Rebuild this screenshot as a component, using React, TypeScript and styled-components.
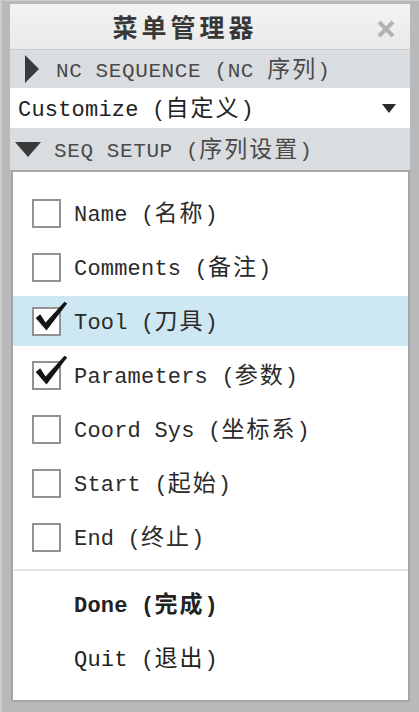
import styled, { createGlobalStyle } from 'styled-components';

const GlobalStyle = createGlobalStyle`
  html, body {
    margin: 0;
    padding: 0;
    background: #bcbcbc;
  }
  * { box-sizing: border-box; }
`;

const MONO = `"Liberation Mono", "Noto Sans CJK SC", monospace`;

type Item = {
  en: string;
  zh: string;
  checked: boolean;
  active?: boolean;
};

const items: Item[] = [
  { en: 'Name', zh: '名称', checked: false },
  { en: 'Comments', zh: '备注', checked: false },
  { en: 'Tool', zh: '刀具', checked: true, active: true },
  { en: 'Parameters', zh: '参数', checked: true },
  { en: 'Coord Sys', zh: '坐标系', checked: false },
  { en: 'Start', zh: '起始', checked: false },
  { en: 'End', zh: '终止', checked: false },
];

const Label = ({ en, zh }: { en: string; zh: string }) => (
  <>
    {en} (<S.Zh>{zh}</S.Zh>)
  </>
);

const CheckMark = () => (
  <S.Mark viewBox="0 0 40 40">
    <path d="M3 21 L8 17 L14 26 L35 3 L38 5 L15 35 Z" fill="#141414" />
  </S.Mark>
);

const App = () => {
  return (
    <S.Window>
      <GlobalStyle />
      <S.TitleBar>
        <S.Title>菜单管理器</S.Title>
        <S.Close viewBox="0 0 18 18">
          <path d="M2 2 L16 16 M16 2 L2 16" stroke="#b2b2b2" strokeWidth="4" />
        </S.Close>
      </S.TitleBar>

      <S.SectionHeader>
        <S.Arrow viewBox="0 0 14 28" $w={14} $h={28}>
          <path d="M0 0 L14 14 L0 28 Z" fill="#3a3a3a" />
        </S.Arrow>
        <S.HeaderText>
          NC SEQUENCE (NC <S.Zh>序列</S.Zh>)
        </S.HeaderText>
      </S.SectionHeader>

      <S.Dropdown>
        <S.DropdownText>
          <Label en="Customize" zh="自定义" />
        </S.DropdownText>
        <S.Caret viewBox="0 0 14 9">
          <path d="M0 0 L14 0 L7 9 Z" fill="#2a2a2a" />
        </S.Caret>
      </S.Dropdown>

      <S.SectionHeader $tall>
        <S.Arrow viewBox="0 0 26 15" $w={26} $h={15} $down>
          <path d="M0 0 L26 0 L13 15 Z" fill="#3a3a3a" />
        </S.Arrow>
        <S.HeaderText>
          SEQ SETUP (<S.Zh>序列设置</S.Zh>)
        </S.HeaderText>
      </S.SectionHeader>

      <S.ListBox>
        <S.Options>
          {items.map((item) => (
            <S.Row key={item.en} $active={item.active}>
              <S.Box>{item.checked && <CheckMark />}</S.Box>
              <S.ItemText>
                <Label en={item.en} zh={item.zh} />
              </S.ItemText>
            </S.Row>
          ))}
        </S.Options>
        <S.Divider />
        <S.Actions>
          <S.Row>
            <S.ActionText $bold>
              <Label en="Done" zh="完成" />
            </S.ActionText>
          </S.Row>
          <S.Row>
            <S.ActionText>
              <Label en="Quit" zh="退出" />
            </S.ActionText>
          </S.Row>
        </S.Actions>
      </S.ListBox>
    </S.Window>
  );
};

const S = {
  Window: styled.div`
    width: 419px;
    height: 712px;
    display: flex;
    flex-direction: column;
    padding: 3px 9px 10px 8px;
    background: #b9b9b9;
    border-left: 2px solid #cdcdcd;
    border-top: 1px solid #cdcdcd;
    font-family: ${MONO};
    color: #222;
  `,
  TitleBar: styled.div`
    position: relative;
    height: 46px;
    flex: none;
    display: flex;
    align-items: center;
    justify-content: center;
    padding-right: 50px;
    background: linear-gradient(#f4f4f4, #e9e9e9);
    border-bottom: 1px solid #c9c9c9;
  `,
  Title: styled.div`
    font-family: "Noto Sans CJK SC", sans-serif;
    font-size: 25px;
    line-height: 1;
    font-weight: 700;
    letter-spacing: 4px;
    color: #383838;
  `,
  Close: styled.svg`
    position: absolute;
    right: 15px;
    top: 16px;
    width: 18px;
    height: 18px;
  `,
  SectionHeader: styled.div<{ $tall?: boolean }>`
    height: ${(p) => (p.$tall ? 42 : 38)}px;
    flex: none;
    display: flex;
    align-items: center;
    background: #dadddf;
    padding-left: ${(p) => (p.$tall ? 5 : 15)}px;
  `,
  Arrow: styled.svg<{ $w: number; $h: number; $down?: boolean }>`
    width: ${(p) => p.$w}px;
    height: ${(p) => p.$h}px;
    flex: none;
    margin-right: ${(p) => (p.$down ? 13 : 17)}px;
  `,
  HeaderText: styled.div`
    font-size: 21px;
    line-height: 1;
    letter-spacing: 0.6px;
    color: #4a4a4a;
    white-space: nowrap;
  `,
  Zh: styled.span`
    font-family: "Noto Sans CJK SC", sans-serif;
    font-size: 23px;
    line-height: 1;
    letter-spacing: 2px;
  `,
  Dropdown: styled.div`
    height: 40px;
    flex: none;
    display: flex;
    align-items: center;
    justify-content: space-between;
    background: #fff;
    padding: 0 14px 0 8px;
  `,
  DropdownText: styled.div`
    font-size: 22px;
    line-height: 1;
    letter-spacing: 0.2px;
    color: #222;
    white-space: nowrap;
  `,
  Caret: styled.svg`
    width: 14px;
    height: 9px;
  `,
  ListBox: styled.div`
    flex: 1;
    display: flex;
    flex-direction: column;
    background: #fff;
    border: 2px solid #a6a6a6;
    margin-left: 1px;
  `,
  Options: styled.div`
    display: flex;
    flex-direction: column;
    gap: 4px;
    padding-top: 16px;
  `,
  Row: styled.div<{ $active?: boolean }>`
    height: 50px;
    display: flex;
    align-items: center;
    padding-left: 19px;
    background: ${(p) => (p.$active ? '#cde7f3' : 'transparent')};
  `,
  Box: styled.div`
    position: relative;
    width: 29px;
    height: 29px;
    flex: none;
    border: 2px solid #929292;
    background: #fff;
    margin-right: 13px;
  `,
  Mark: styled.svg`
    position: absolute;
    left: -1px;
    top: -10px;
    width: 36px;
    height: 36px;
  `,
  ItemText: styled.div`
    font-size: 22px;
    line-height: 1;
    letter-spacing: 0.2px;
    color: #2a2a2a;
    white-space: nowrap;
  `,
  Divider: styled.div`
    height: 2px;
    margin: 7px 0 8px 1px;
    background: #e2e2e2;
  `,
  Actions: styled.div`
    display: flex;
    flex-direction: column;
    gap: 4px;
    padding-left: 42px;
  `,
  ActionText: styled.div<{ $bold?: boolean }>`
    font-size: 22px;
    line-height: 1;
    letter-spacing: 0.2px;
    font-weight: ${(p) => (p.$bold ? 700 : 400)};
    color: #222;
    white-space: nowrap;
  `,
};

export default App;
